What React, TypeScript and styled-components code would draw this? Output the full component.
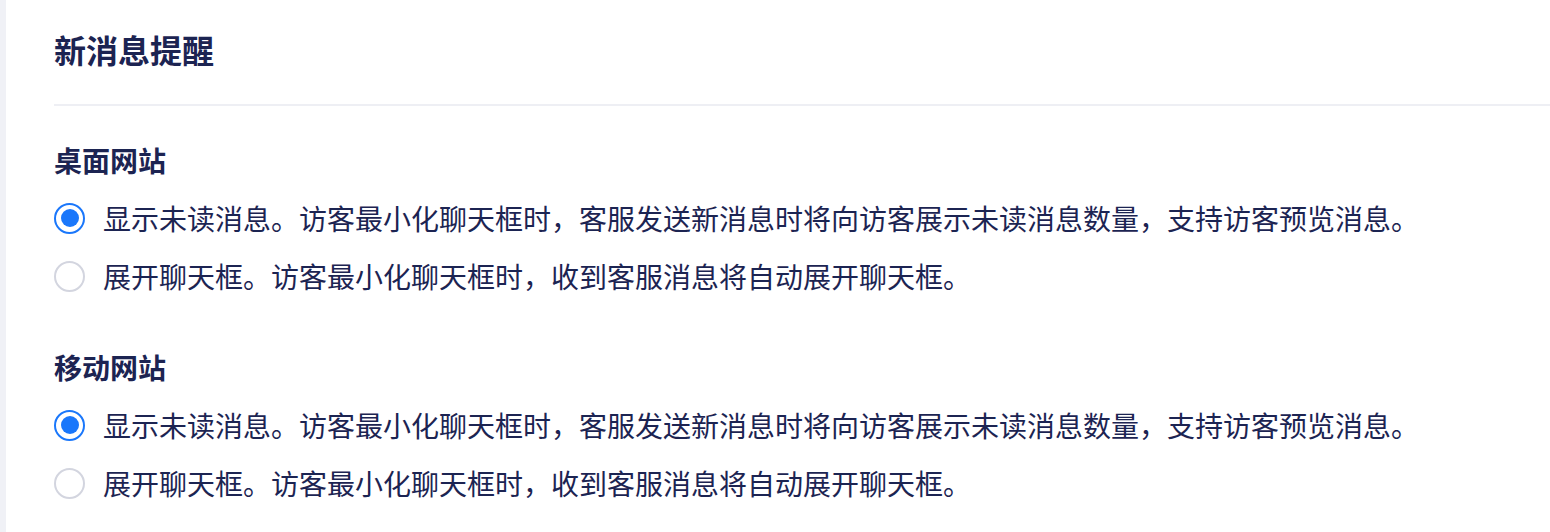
import styled, { createGlobalStyle } from 'styled-components';

const GlobalStyle = createGlobalStyle`
  html, body {
    margin: 0;
    padding: 0;
    background: #fff;
  }
  body {
    font-family: "Noto Sans CJK SC", "Noto Sans", sans-serif;
    color: #1c2452;
  }
`;

const Wrap = styled.div`
  display: flex;
  min-height: 532px;
`;
const SideStripe = styled.div`
  width: 6px;
  flex-shrink: 0;
  background: #f0f1f6;
`;
const Main = styled.div`
  flex: 1;
  padding: 25px 0 0 48px;
`;
const Title = styled.h1`
  margin: 0;
  font-size: 32px;
  line-height: 48px;
  font-weight: 700;
`;
const Divider = styled.div`
  height: 2px;
  margin-top: 31px;
  background: #eeeff4;
`;
const Section = styled.section<{ first?: boolean }>`
  margin-top: ${(p) => (p.first ? '32px' : '40px')};
`;
const SectionTitle = styled.h2`
  margin: 0 0 7px;
  font-size: 28px;
  line-height: 44px;
  font-weight: 700;
`;
const Option = styled.label`
  height: 58px;
  display: flex;
  align-items: center;
  cursor: pointer;
  font-size: 28px;
  font-weight: 400;
`;
const RadioCircle = styled.span<{ checked?: boolean }>`
  width: 31px;
  height: 31px;
  margin-right: 18px;
  box-sizing: border-box;
  border-radius: 50%;
  border: 2px solid ${(p) => (p.checked ? '#1a77fb' : '#d3d5df')};
  display: flex;
  align-items: center;
  justify-content: center;
  flex-shrink: 0;

  &::after {
    content: '';
    display: ${(p) => (p.checked ? 'block' : 'none')};
    width: 18px;
    height: 18px;
    border-radius: 50%;
    background: #1a77fb;
  }
`;

const options = [
  '显示未读消息。访客最小化聊天框时，客服发送新消息时将向访客展示未读消息数量，支持访客预览消息。',
  '展开聊天框。访客最小化聊天框时，收到客服消息将自动展开聊天框。'
];

const sections = ['桌面网站', '移动网站'];

const App = () => {
  return (
    <>
      <GlobalStyle />
      <Wrap>
        <SideStripe />
        <Main>
          <Title>新消息提醒</Title>
          <Divider />
          {sections.map((name, sIdx) => (
            <Section key={name} first={sIdx === 0}>
              <SectionTitle>{name}</SectionTitle>
              {options.map((text, idx) => (
                <Option key={idx}>
                  <RadioCircle checked={idx === 0} />
                  {text}
                </Option>
              ))}
            </Section>
          ))}
        </Main>
      </Wrap>
    </>
  );
};

export default App;
